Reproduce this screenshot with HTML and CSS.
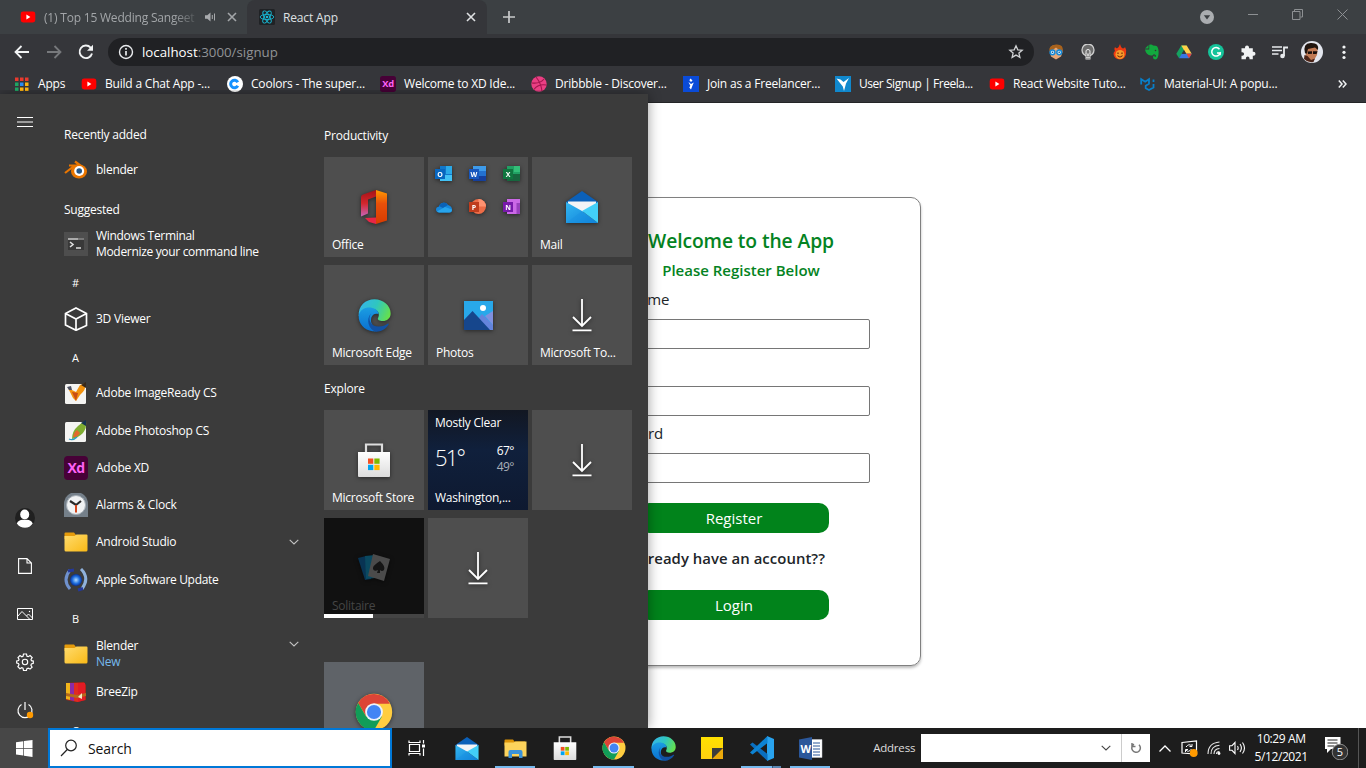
FILE: index.html
```html
<!DOCTYPE html>
<html lang="en">
<head>
<meta charset="utf-8">
<title>React App</title>
<link rel="stylesheet" href="styles.css">
</head>
<body>
<svg class="defs" aria-hidden="true">
  <defs>
    <linearGradient id="gEdgeA" x1="0" y1="0.3" x2="1" y2="0.6"><stop offset="0" stop-color="#35b5e8"/><stop offset=".5" stop-color="#2fc6c0"/><stop offset="1" stop-color="#66e04b"/></linearGradient>
    <linearGradient id="gEdgeB" x1="0" y1="0" x2="0" y2="1"><stop offset="0" stop-color="#1b9de2"/><stop offset="1" stop-color="#0a6fd0"/></linearGradient>
    <linearGradient id="gMail" x1="0" y1="0" x2="1" y2="1"><stop offset="0" stop-color="#34b7f1"/><stop offset="1" stop-color="#0d7fd8"/></linearGradient>
    <linearGradient id="gOff" x1="0" y1="0" x2="0" y2="1"><stop offset="0" stop-color="#a31217"/><stop offset=".5" stop-color="#d3262c"/><stop offset="1" stop-color="#c765b8"/></linearGradient>
    <linearGradient id="gOffR" x1="0" y1="0" x2="0" y2="1"><stop offset="0" stop-color="#ff9a00"/><stop offset=".4" stop-color="#e8500a"/><stop offset="1" stop-color="#d83b01"/></linearGradient>
    <linearGradient id="gFold" x1="0" y1="0" x2="1" y2="1"><stop offset="0" stop-color="#ffdc6e"/><stop offset="1" stop-color="#f9b916"/></linearGradient>
    <linearGradient id="gBag" x1="0" y1="0" x2="0" y2="1"><stop offset="0" stop-color="#fff"/><stop offset="1" stop-color="#dcdcdc"/></linearGradient>
    <linearGradient id="gNote" x1="0" y1="0" x2="0" y2="1"><stop offset="0" stop-color="#ffe100"/><stop offset="1" stop-color="#ffcf10"/></linearGradient>
    <radialGradient id="gGlobe"><stop offset="0" stop-color="#b4dcff"/><stop offset=".6" stop-color="#1f70e0"/><stop offset="1" stop-color="#0b2f90"/></radialGradient>
    <symbol id="youtube" viewBox="0 0 16 12"><rect x=".7" y=".6" width="14.6" height="10.8" rx="2.4" fill="#f00"/><path d="M6.4 3.6v4.8L10.4 6z" fill="#fff"/></symbol>
    <symbol id="close" viewBox="0 0 10 10"><path d="M1 1l8 8M9 1L1 9" fill="none" stroke="currentColor" stroke-width="1.6"/></symbol>
    <symbol id="chev" viewBox="0 0 10 6"><path d="M.7.8L5 5 9.300.8" fill="none" stroke="currentColor" stroke-width="1.1"/></symbol>
    <symbol id="chrome" viewBox="0 0 48 48"><circle cx="24" cy="24" r="23" fill="#ffcd40"/><path d="M4 12.500A23 23 0 0 1 44 13.500H24L14 29.500z" fill="#dc4437"/><path d="M4 12.500A23 23 0 0 0 24 47L34 29.700H14z" fill="#119d58"/><circle cx="24" cy="24" r="11.200" fill="#eef2fa"/><circle cx="24" cy="24" r="8.900" fill="#4285f4"/></symbol>
    <symbol id="edge" viewBox="0 0 48 48"><path d="M1 25C0 10 11 .5 24 .5 37 .5 47.500 10 47.500 21c0 7-5.500 11-11.500 11-5 0-8-2-7-4 3-5 1-12-6-13C13 13 4 18 1 25z" fill="url(#gEdgeA)"/><path d="M1 24C3 14 13 11 21 13c7 2 9 6 9 9-10-3-13 8-10 14 3 6 9 8 14 8-4 3-9 3.500-13 3C9 45 .5 36 1 24z" fill="url(#gEdgeB)"/><path d="M19 21c-6 9 0 19 11 19 6 0 10-2 13-4 1-.5 2 0 1.500 1C40 44 33 47.500 27 47.500 15 45 11 29 19 21z" fill="#1251a3"/></symbol>
    <symbol id="mail" viewBox="0 0 36 34"><path d="M2 12L18 1l16 11-3 6H5z" fill="#0b60b8"/><path d="M4 11.500h28v5L18 22 4 16z" fill="#f4f4f6"/><path d="M2 12l16 9 16 12H2z" fill="url(#gMail)"/><path d="M34 12L18 21l16 12z" fill="#42cff8"/><path d="M2 33L18 21l16 12z" fill="#168ce0" opacity=".35"/></symbol>
    <symbol id="folder" viewBox="0 0 24 20"><path d="M.5 1.500Q.5.5 1.500.5H10l2 2.500H22v4H.5z" fill="#e59b0b"/><path d="M.5 4H10.500L12.500 2.500H22.500Q23.500 2.500 23.500 3.500V18Q23.500 19.500 22 19.500H2Q.5 19.500.5 18z" fill="url(#gFold)"/></symbol>
    <symbol id="store" viewBox="0 0 34 36"><path d="M9 12V2.500h16V12" fill="none" stroke="#ddd" stroke-width="2.200"/><path d="M1 10h32v24q0 1-1 1H2q-1 0-1-1z" fill="url(#gBag)"/><path d="M11 16.500h5.300v5.300H11z" fill="#f25022"/><path d="M17.300 16.500h5.300v5.300h-5.300z" fill="#7fba00"/><path d="M11 22.800h5.300v5.300H11z" fill="#00a4ef"/><path d="M17.300 22.800h5.300v5.300h-5.300z" fill="#ffb900"/></symbol>
    <symbol id="down" viewBox="0 0 20 34"><path d="M10 1v26M1 19l9 9 9-9M.5 32.300h19" fill="none" stroke="#fff" stroke-width="1.800"/></symbol>
    <symbol id="xd" viewBox="0 0 24 24"><rect width="24" height="24" rx="4" fill="#470137"/><text x="12" y="17" text-anchor="middle" font-family="Open Sans, sans-serif" font-size="14" font-weight="700" letter-spacing="-.5" fill="#ff61f6">Xd</text></symbol>
  </defs>
</svg>

<div class="desktop">
  <section class="browser">
    <header class="tabs">
      <div class="tab tab-idle">
        <svg class="tab-yt"><use href="#youtube"/></svg>
        <span class="tab-title fade">(1) Top 15 Wedding Sangeet</span>
        <svg class="speaker" viewBox="0 0 12 10"><path d="M0 3.300h2.300L5.500.5v9L2.300 6.700H0z" fill="#a8aaad"/><path d="M7.300 3v4M9.500 1.500v7" stroke="#a8aaad" fill="none"/></svg>
        <svg class="tab-x"><use href="#close"/></svg>
      </div>
      <div class="tab tab-active">
        <svg class="react" viewBox="0 0 16 16"><rect width="16" height="16" rx="1.500" fill="#202225"/><g fill="none" stroke="#18b8d4" stroke-width=".9"><ellipse cx="8" cy="8" rx="6.800" ry="2.600"/><ellipse cx="8" cy="8" rx="6.800" ry="2.600" transform="rotate(60 8 8)"/><ellipse cx="8" cy="8" rx="6.800" ry="2.600" transform="rotate(120 8 8)"/></g><circle cx="8" cy="8" r="1.300" fill="#18b8d4"/></svg>
        <span class="tab-title">React App</span>
        <svg class="tab-x"><use href="#close"/></svg>
      </div>
      <svg class="plus" viewBox="0 0 12 12"><path d="M6 0v12M0 6h12" stroke="#c8cacc" stroke-width="1.700"/></svg>
      <div class="window-buttons">
        <svg width="14" height="14" viewBox="0 0 14 14"><circle cx="7" cy="7" r="7" fill="#aaadb0"/><path d="M3.800 5.200h6.400L7 9.500z" fill="#3c4043"/></svg>
        <svg width="10" height="10" viewBox="0 0 10 10"><path d="M0 5.500h10" stroke="#8d9093"/></svg>
        <svg width="11" height="11" viewBox="0 0 11 11"><path d="M.5 2.500h7.500v8H.5zM2.500 2V.5h8v7.500H8.500" fill="none" stroke="#8d9093"/></svg>
        <svg width="11" height="11" viewBox="0 0 11 11"><path d="M.5.5l10 10M10.500.5l-10 10" stroke="#8d9093"/></svg>
      </div>
    </header>

    <div class="toolbar">
      <div class="nav">
        <svg width="16" height="14" viewBox="0 0 16 14"><path d="M15 7H1.500M7.500 1l-6 6 6 6" fill="none" stroke="#f1f3f4" stroke-width="1.800"/></svg>
        <svg width="16" height="14" viewBox="0 0 16 14"><path d="M1 7h13.500M8.500 1l6 6-6 6" fill="none" stroke="#77797c" stroke-width="1.800"/></svg>
        <svg width="16" height="16" viewBox="0 0 16 16"><path d="M14 9.500A6.300 6.300 0 1 1 12.600 3.600L14.300 5.500" fill="none" stroke="#f1f3f4" stroke-width="1.900"/><path d="M15 .8v6H9z" fill="#f1f3f4"/></svg>
      </div>
      <div class="omnibox">
        <svg class="info" viewBox="0 0 16 16"><circle cx="8" cy="8" r="6.500" fill="none" stroke="#e8eaed" stroke-width="1.400"/><path d="M8 7v4.500M8 4v1.700" stroke="#e8eaed" stroke-width="1.700"/></svg>
        <span class="url"><b>localhost</b>:3000/signup</span>
        <svg class="star" viewBox="0 0 16 16"><path d="M8 1.800l1.800 4 4.400.4-3.300 2.900 1 4.300L8 11.100l-3.900 2.300 1-4.300L1.800 6.200l4.400-.4z" fill="none" stroke="#d0d2d4" stroke-width="1.300"/></svg>
      </div>
      <div class="extensions">
        <svg viewBox="0 0 16 16"><path d="M2 8Q1 1 8 1t6.500 7L13 12.500 8 15.500l-5-3z" fill="#e8a878"/><path d="M1.500 8Q0 1 8 .5T14.500 7Q10 6 8 3.500 5 6 1.500 8z" fill="#a8621c"/><circle cx="4.500" cy="8.300" r="2.400" fill="#d8f3ff" stroke="#1689d8" stroke-width="1.500"/><circle cx="11.200" cy="8.300" r="2.400" fill="#d8f3ff" stroke="#1689d8" stroke-width="1.500"/><circle cx="4.500" cy="8.300" r=".8" fill="#114a80"/><circle cx="11.200" cy="8.300" r=".8" fill="#114a80"/></svg>
        <svg viewBox="0 0 16 16"><circle cx="8" cy="6" r="6" fill="#6d6d6d" stroke="#cfcfcf" stroke-width="1.300"/><path d="M5.500 9.500h5v6h-5z" fill="#d8d8d8"/><path d="M6.700 12V6.500Q8 5 9.300 6.500V12M5.500 12.500h5M5.500 14.300h5" fill="none" stroke="#8a8a8a" stroke-width=".9"/><path d="M6 10V6.500Q8 4 10 6.500V10" fill="none" stroke="#e6e6e6"/></svg>
        <svg viewBox="0 0 16 16"><path d="M3 7Q1.500 5.500 3 3q1.500 2 2.500 1Q7 3 8 0q1 4 3 4.500Q12.500 4 13 3q2 3 1 7-1 5-6 5.500-6-.5-6.500-5.500Q1.500 8 3 7z" fill="#ee3a12"/><circle cx="8" cy="10.500" r="4.500" fill="#f59a2a"/><path d="M6 8.500v1.500M10 8.500v1.500M5.500 11.500q2.500 3 5 0" stroke="#6a2008" fill="none" stroke-width="1.100"/></svg>
        <svg viewBox="0 0 16 16"><path d="M1 4.500L4.500 1V4.500zM5.200.7Q8 0 9 1.500q3 0 4 .8 2 2.500 1.500 8-.5 5-3 5.200-2.500 0-2.500-2.200 0-1.800 1.600-1.800v1.300q1.400.4 1.500-1-1-2-2.500-1.600Q9 12 7 11.500 2 11 1 5.400h4.200z" fill="#12a83e"/><circle cx="11.500" cy="6.500" r=".8" fill="#333"/></svg>
        <svg viewBox="0 0 16 16"><path d="M5.300 1.500h5.400L6 10l-3 4.300L.3 9.800z" fill="#15a260"/><path d="M5.300 1.500h5.400l5 8.300H10z" fill="#ffcf48"/><path d="M3 14.300l2.700-4.500h10L13 14.300z" fill="#3777e3"/><path d="M8 6l2.300 3.800H5.700z" fill="#35363a"/><path d="M10.500 9.800h5.200L13 14.300z" fill="#e84335"/></svg>
        <svg viewBox="0 0 16 16"><circle cx="8" cy="8" r="8" fill="#15c39a"/><path d="M11.500 5.200A4.300 4.300 0 1 0 12.200 9H9" fill="none" stroke="#fff" stroke-width="1.500"/><path d="M12.800 7.800v3.600l-2.600-2z" fill="#fff"/></svg>
        <svg viewBox="0 0 16 16"><path d="M1.500 4.200H5V3.500a2 2 0 0 1 4 0v.7h3.800v3.600h.7a2 2 0 0 1 0 4h-.7v3.500H9.500v-1a1.800 1.800 0 0 0-3.600 0v1H1.500v-3.500h.8a1.800 1.800 0 0 0 0-3.600h-.8z" fill="#f1f3f4"/></svg>
        <svg viewBox="0 0 16 16"><path d="M0 3h10M0 6.500h10M0 10h6.500" stroke="#e8eaed" stroke-width="1.700"/><path d="M12 12V3.500h4" fill="none" stroke="#e8eaed" stroke-width="1.800"/><circle cx="10.500" cy="12" r="2.300" fill="#e8eaed"/></svg>
        <svg class="avatar" viewBox="0 0 22 22"><circle cx="11" cy="11" r="11" fill="#e3e6ee"/><path d="M5 19Q4 9 5.500 7 8 3 12 4q5 1 4.500 6l-.5 4-3 5Q8 22 5 19z" fill="#c07a55"/><path d="M4 12Q1.500 2.500 9.500 2q9-.5 7.500 7L14 6.500 7 8l-1.500 5z" fill="#20150f"/><path d="M6.500 10.500l4.500-.3v2.600l-4 .2zM12 10.200h4.500l-1 2.800H12z" fill="#180f0d"/><path d="M3.500 14l3 1 3.500 4 4-1.500-1.500 3.500Q7 22 3 18z" fill="#4a2418"/></svg>
        <svg viewBox="0 0 16 16"><g fill="#f1f3f4"><circle cx="8" cy="3" r="1.600"/><circle cx="8" cy="8.300" r="1.600"/><circle cx="8" cy="13.500" r="1.600"/></g></svg>
      </div>
    </div>

    <nav class="bookmarks">
      <a class="bm apps"><svg viewBox="0 0 14 14"><path d="M0 .5h3.500V4H0zM5 .5h3.500V4H5zM10 .5h3.500V4H10z" fill="#ea3a2e"/><path d="M0 5.500h3.500V9H0z" fill="#1fa463"/><path d="M5 5.500h3.500V9H5z" fill="#2b8cf4"/><path d="M10 5.500h3.500V9H10zM5 10.500h3.500V14H5zM10 10.500h3.500V14H10z" fill="#fbb212"/><path d="M0 10.500h3.500V14H0z" fill="#1fa463"/></svg><span>Apps</span></a>
      <a class="bm"><svg viewBox="0 0 16 12"><use href="#youtube"/></svg><span>Build a Chat App -...</span></a>
      <a class="bm"><svg viewBox="0 0 16 16"><circle cx="8" cy="8" r="8" fill="#fff"/><path d="M10.800 9.800A3.800 3.800 0 1 1 10.800 6.200" fill="none" stroke="#1591ff" stroke-width="3"/></svg><span>Coolors - The super...</span></a>
      <a class="bm"><svg viewBox="0 0 24 24"><use href="#xd"/></svg><span>Welcome to XD Ide...</span></a>
      <a class="bm"><svg viewBox="0 0 16 16"><circle cx="8" cy="8" r="7.700" fill="#ea3f83"/><path d="M5 1q5 6 6 14M1 7q8 1 12-4M3 13.500q4-6 12.500-4.500" fill="none" stroke="#a1154d" stroke-width="1.100"/></svg><span>Dribbble - Discover...</span></a>
      <a class="bm"><svg viewBox="0 0 16 16"><path d="M0 0h16v16H0z" fill="#0a4bd8"/><path d="M7.500 2.500l2 2-1.500 1.500-1.700-1.700zM5.500 6l2.500 2 2.800-1.500L9.500 9.500 8 13.500 6.300 11.500 7.300 9.800z" fill="#fff"/></svg><span>Join as a Freelancer...</span></a>
      <a class="bm freela"><svg viewBox="0 0 16 16"><path d="M0 0h16v16H0z" fill="#1088cd"/><path d="M1.500 2.500L5.500 3.500 8.500 6 14 2l-3 5.500L9 15 7.800 10.500 5 7z" fill="#fff"/></svg><span>User Signup | Freela...</span></a>
      <a class="bm"><svg viewBox="0 0 16 12"><use href="#youtube"/></svg><span>React Website Tuto...</span></a>
      <a class="bm"><svg viewBox="0 0 16 16"><path d="M1.200 8.500V3.200l4 2.500L9 3.200v4.500L5.700 9.800v2.500l3.300 1.700 4.500-2.500V8" fill="none" stroke="#087fc9" stroke-width="1.800"/><path d="M13.500 3.500V6" stroke="#087fc9" stroke-width="1.800"/></svg><span>Material-UI: A popu...</span></a>
      <a class="more"><svg width="9" height="8" viewBox="0 0 9 8"><path d="M.8.5L4 4 .8 7.500M4.800.5L8 4 4.800 7.500" fill="none" stroke="#f1f3f4" stroke-width="1.500"/></svg></a>
    </nav>

    <main class="page">
      <form class="card">
        <h1>Welcome to the App</h1>
        <h2>Please Register Below</h2>
        <label>Username<input type="text"></label>
        <label>Email<input type="text"></label>
        <label class="pw">Password<input type="text"></label>
        <button type="button">Register</button>
        <p>Already have an account??</p>
        <button type="button">Login</button>
      </form>
    </main>
  </section>

  <aside class="start">
    <div class="rail">
      <div class="burger"><svg width="16" height="10" viewBox="0 0 16 10"><path d="M0 .5h16M0 5h16M0 9.500h16" stroke="#fff"/></svg></div>
      <div><svg width="20" height="20" viewBox="0 0 20 20"><circle cx="10" cy="10" r="10" fill="#202020"/><ellipse cx="9.700" cy="6.500" rx="4.500" ry="5" fill="#fff"/><path d="M1.800 15.500Q4 11 9.700 12q6-1 8 3.500Q15 19.700 10 19.800 5 19.800 1.800 15.500z" fill="#fff"/></svg></div>
      <div><svg width="14" height="16" viewBox="0 0 14 16"><path d="M.6.600h8.400l4.400 4.400v10.400H.6zM9 .6V5h4.400" fill="none" stroke="#fff" stroke-width="1.100"/></svg></div>
      <div><svg width="16" height="12" viewBox="0 0 16 12"><path d="M.5.500h15v11H.5zM.5 8.500l4.500-5 7.500 7.500M9.500 8l2-2 4 4" fill="none" stroke="#fff"/><circle cx="12.500" cy="3.500" r=".7" fill="#fff"/></svg></div>
      <div><svg width="18" height="18" viewBox="0 0 18 18"><circle cx="9" cy="9" r="2.700" fill="none" stroke="#fff" stroke-width="1.100"/><path d="M7.500 1h3l.5 2.200 1.200.5 1.900-1.200 2.100 2.100L15 6.500l.5 1.200 1.800.4v2.300l-1.900.5-.5 1.300 1.200 1.900-2.100 2-1.800-1-1.300.5-.5 1.900H7.500L7 15.200l-1.300-.5-1.800 1-2-2 1.100-1.900-.5-1.300L.7 10V7.900l1.900-.4L3 6.300 2 4.600l2-2.100 1.800 1.200L7 3.200z" fill="none" stroke="#fff" stroke-width="1.200"/></svg></div>
      <div><svg width="18" height="18" viewBox="0 0 18 18"><path d="M5.500 3.500a7 7 0 1 0 7 0M9 1v8" fill="none" stroke="#fff" stroke-width="1.200"/><circle cx="14" cy="14" r="3.200" fill="#ff9a00"/></svg></div>
    </div>

    <div class="app-list">
      <div class="row head">Recently added</div>
      <div class="row down1"><svg viewBox="0 0 24 24"><path d="M1 15L10 8M5 7.500h9M11 3.500l8 6" stroke="#ea7600" stroke-width="2.200"/><ellipse cx="15" cy="13.500" rx="8" ry="7" fill="#ea7600"/><circle cx="15.200" cy="13" r="5" fill="#fff"/><circle cx="15.200" cy="13" r="2.800" fill="#265787"/></svg><span>blender</span></div>
      <div class="row head">Suggested</div>
      <div class="row"><svg viewBox="0 0 24 24"><path d="M0 0h24v24H0z" fill="#4e4e4e"/><path d="M4 6h16v12H4z" fill="#393939"/><path d="M4 6h10v2H4z" fill="#aaa"/><path d="M14 6h6v2h-6z" fill="#777"/><path d="M6 10l3 2.500L6 15M12 16h5" stroke="#ddd" stroke-width="1.600" fill="none"/></svg><span class="tight">Windows Terminal<br>Modernize your command line</span></div>
      <div class="row letter">#</div>
      <div class="row"><svg viewBox="0 0 24 24"><path d="M12 1l10.500 5.500v12L12 23.300 1.500 18V6.500zM1.500 6.500L12 12l10.500-5.500M12 12v11" fill="none" stroke="#fff" stroke-width="1.700"/></svg><span>3D Viewer</span></div>
      <div class="row letter">A</div>
      <div class="row"><svg viewBox="0 0 24 24"><rect x="1" y="3" width="21" height="20" rx="1.500" fill="#f4f4f2"/><path d="M4 7l8 4 4-7 6-2q0 7-6 12l-4 6-3-3z" fill="#f2920e"/><path d="M8 11l4 9 2-8z" fill="#c94d12"/><path d="M17 4l5-3v6z" fill="#38291b"/><path d="M3 6l4-1 1 4H5z" fill="#4b5062"/></svg><span>Adobe ImageReady CS</span></div>
      <div class="row"><svg viewBox="0 0 24 24"><rect x="1" y="3" width="21" height="20" rx="1.500" fill="#f4f4f2"/><path d="M8 20Q8 12 14 7q4-4 8-5 1 7-3 12-5 5-11 6z" fill="#7fad32"/><path d="M9 18q1-5 4-7l3 3q-3 5-7 4z" fill="#e2682c"/><path d="M17 4l5-3v6z" fill="#153452"/><path d="M5 20q4 2 8-2" fill="none" stroke="#2b9bc6" stroke-width="1.300"/></svg><span>Adobe Photoshop CS</span></div>
      <div class="row"><svg viewBox="0 0 24 24"><use href="#xd"/></svg><span>Adobe XD</span></div>
      <div class="row"><svg viewBox="0 0 24 24"><path d="M0 24V11A11 11 0 0 1 24 11V24z" fill="#75808a"/><circle cx="12" cy="12" r="9.500" fill="#f0f2f3" stroke="#a7afb7"/><path d="M6 8l6 4 5-4" fill="none" stroke="#282828" stroke-width="2.200"/><path d="M12 12v7.500" stroke="#d3441b" stroke-width="2"/></svg><span>Alarms &amp; Clock</span></div>
      <div class="row up1"><svg viewBox="0 0 24 20"><use href="#folder"/></svg><span>Android Studio</span><svg class="chev"><use href="#chev"/></svg></div>
      <div class="row"><svg viewBox="0 0 24 24"><circle cx="12" cy="12" r="6" fill="url(#gGlobe)"/><path d="M6 2Q-2 12 6 21" fill="none" stroke="#6f91cd" stroke-width="3"/><path d="M17 1q9 9 1 20" fill="none" stroke="#8fb1db" stroke-width="3"/><path d="M4 3l6-1M14 22l5-1.500" stroke="#24399a" stroke-width="3"/></svg><span class="tight">Apple Software Update</span></div>
      <div class="row letter">B</div>
      <div class="row tall up1"><svg viewBox="0 0 24 20"><use href="#folder"/></svg><span>Blender<br><em>New</em></span><svg class="chev"><use href="#chev"/></svg></div>
      <div class="row"><svg viewBox="0 0 24 24"><path d="M2 3l18-1 2 3v15l-9 2-11-2z" fill="#b22415"/><path d="M2 3h4v17l-4-1z" fill="#f1b51b"/><path d="M6 3h4v18l-4-1z" fill="#8b2ba7"/><path d="M10 3h4v19l-4-1z" fill="#e02c21"/><path d="M14 3h7v17l-7 2z" fill="#e21b25"/><path d="M2 13l11 2 9-2v3l-9 2-11-2z" fill="#b46a1c"/><path d="M14 17l4-4v6z" fill="#f4e7bf"/></svg><span>BreeZip</span></div>
      <div class="row letter">C</div>
    </div>

    <div class="tiles">
      <h3>Productivity</h3>
      <div class="grid">
        <div class="tile"><svg width="32" height="36" viewBox="0 0 32 36"><path d="M3 8Q3 6 5 5.500L18 1v6.500L10 10.500v14l-7 3z" fill="url(#gOff)"/><path d="M18 1l11 3.500v27L18 35z" fill="url(#gOffR)"/><path d="M7 29l11-.5V35L11 33z" fill="#e82645"/></svg><span>Office</span></div>
        <div class="tile minis">
          <svg viewBox="0 0 18 16"><path d="M5 0h12v15H5z" fill="#1177ca"/><path d="M11 0h6v8h-6z" fill="#2aa9e8"/><path d="M5 9l12 0v6H5z" fill="#42c2f5"/><path d="M0 3h10v10H0z" fill="#0866bf"/><text x="5" y="10.600" text-anchor="middle">O</text></svg>
          <svg viewBox="0 0 18 16"><path d="M4 0h13v5H4z" fill="#3e9bea"/><path d="M4 5h13v5H4z" fill="#2371cf"/><path d="M4 10h13v5H4z" fill="#153f9c"/><path d="M0 3h10v10H0z" fill="#1857bd"/><text x="5" y="10.600" text-anchor="middle">W</text></svg>
          <svg viewBox="0 0 18 16"><path d="M4 0h13v8H4z" fill="#21a063"/><path d="M11 0h6v6h-6z" fill="#33bf78"/><path d="M4 8h13v7H4z" fill="#17663e"/><path d="M0 3h10v10H0z" fill="#10763f"/><text x="5" y="10.600" text-anchor="middle">X</text></svg>
          <svg viewBox="0 0 18 16"><path d="M4 7.500A5 5 0 0 1 13 6q4 1 4 4.500T14 13.500H4Q1 13 1 10.500T4 7.500z" fill="#1587dc"/><path d="M4 7A5 5 0 0 1 13 6L8 9z" fill="#0b62b7"/><path d="M2 12.500L10 8l7 2.500q0 3-3 3H4z" fill="#27a5ed"/></svg>
          <svg viewBox="0 0 18 16"><circle cx="9.500" cy="7.500" r="7.500" fill="#ed6c47"/><path d="M9.500 0a7.500 7.500 0 0 1 7.500 7.500H9.500z" fill="#ff9270"/><path d="M0 3h10v10H0z" fill="#bf3d1e"/><text x="5" y="10.600" text-anchor="middle">P</text></svg>
          <svg viewBox="0 0 18 16"><path d="M4 0h13v15H4z" fill="#cb68e7"/><path d="M13.500 4H17v4h-3.500zM13.500 8H17v7h-3.500z" fill="#9840bd"/><path d="M0 3h10v10H0z" fill="#7719aa"/><text x="5" y="10.600" text-anchor="middle">N</text></svg>
        </div>
        <div class="tile"><svg width="36" height="34"><use href="#mail"/></svg><span>Mail</span></div>
        <div class="tile"><svg width="33" height="33"><use href="#edge"/></svg><span>Microsoft Edge</span></div>
        <div class="tile"><svg width="29" height="29" viewBox="0 0 29 29"><path d="M0 0h29v29H0z" fill="#28a8ea"/><path d="M13 29V19l5-6 11 11v5z" fill="#6484dc"/><path d="M29 10v14l-8-9z" fill="#8090df"/><path d="M0 19L8.500 10 26 29H0z" fill="#16468c"/><circle cx="19" cy="7" r="3" fill="#fff"/></svg><span>Photos</span></div>
        <div class="tile"><svg width="20" height="34"><use href="#down"/></svg><span>Microsoft To...</span></div>
      </div>
      <h3>Explore</h3>
      <div class="grid">
        <div class="tile"><svg width="34" height="36"><use href="#store"/></svg><span>Microsoft Store</span></div>
        <div class="tile weather">
          <div>Mostly Clear</div>
          <div class="temps"><strong>51°</strong><div>67°<i>49°</i></div></div>
          <div>Washington,...</div>
        </div>
        <div class="tile"><svg width="20" height="34"><use href="#down"/></svg></div>
        <div class="tile solitaire"><svg width="32" height="30" viewBox="0 0 32 30"><path d="M0 5l8-2 5 23-6 1z" fill="#083353"/><path d="M7 3l10-1v23l-9 1z" fill="#0a4960"/><path d="M15 1l17 5-6 22-16-5z" fill="#4b4b4b"/><path d="M22 8q6 6 4 9-2 2-4 0v3h-3l1-3q-4 2-5-1t7-8z" fill="#151515"/></svg><span>Solitaire</span><div class="progress"></div></div>
        <div class="tile"><svg width="20" height="34"><use href="#down"/></svg></div>
      </div>
      <div class="grid third">
        <div class="tile chrome-tile"><svg width="38" height="38"><use href="#chrome"/></svg></div>
      </div>
    </div>
  </aside>

  <footer class="taskbar">
    <div class="win"><svg width="17" height="17" viewBox="0 0 17 17"><path d="M0 2.200L7.300 1.200v6.800H0zM8 1.100L16.500 0v8H8zM0 8.700h7.300v6.900L0 14.600zM8 8.700h8.500V17L8 15.700z" fill="#fff"/></svg></div>
    <div class="search"><svg width="18" height="18" viewBox="0 0 18 18"><circle cx="11" cy="6.500" r="5.300" fill="none" stroke="#222" stroke-width="1.200"/><path d="M7.300 10.500L1 17" stroke="#222" stroke-width="1.200"/></svg>Search</div>
    <div class="pins">
      <div><svg width="18" height="16" viewBox="0 0 18 16"><path d="M1.500 4.500h10v7h-10zM1 .5v2h11v-2M1 15.500v-2h11v2M15.500 0v3.500M15.500 8.500V16" fill="none" stroke="#fff" stroke-width="1.200"/><path d="M14 4.500h3v3h-3z" fill="#fff"/></svg></div>
      <div><svg width="26" height="25"><use href="#mail"/></svg></div>
      <div class="on"><svg width="23" height="19" viewBox="0 0 23 19"><path d="M.5 1.500Q.5.5 1.500.5H9l1.500 2H21v4H.5z" fill="#dc9307"/><path d="M.5 3.500h9l2-1H22.500V17.500H.5z" fill="#fcd35c"/><path d="M4.500 19v-6q0-2 2-2h10q2 0 2 2v6H15v-4H8v4z" fill="#3b92d8"/></svg></div>
      <div><svg width="24" height="26"><use href="#store"/></svg></div>
      <div class="on"><svg width="24" height="24"><use href="#chrome"/></svg></div>
      <div><svg width="25" height="25"><use href="#edge"/></svg></div>
      <div><svg width="22" height="22" viewBox="0 0 22 22"><path d="M0 0h22v11H11v11H0z" fill="url(#gNote)"/><path d="M11 11h11L11 22z" fill="#3c3c3c"/><path d="M22 11v11H11z" fill="#eba90b"/></svg></div>
      <div class="on double"><svg width="25" height="25" viewBox="0 0 25 25"><path d="M18 0l7 3v19l-7 3z" fill="#29a3ee"/><path d="M1 8.500l2.500-2L18.500 18v7z" fill="#0a6fc0"/><path d="M1 16.500l2.500 2L18.500 7V0z" fill="#0d83d3"/></svg></div>
      <div class="on"><svg width="24" height="23" viewBox="0 0 24 23"><path d="M11 2.500h12v18H11z" fill="#fff" stroke="#c4c8d0" stroke-width=".5"/><path d="M14 6h7M14 9h7M14 12h7M14 15h7M14 18h7" stroke="#2b579a"/><path d="M0 2.500L13 0v23L0 20.500z" fill="#2b579a"/><text class="word" x="6.700" y="15.500" text-anchor="middle">W</text></svg></div>
    </div>
    <div class="tray">
      <span class="addr-label">Address</span>
      <div class="addr"><svg class="chev"><use href="#chev"/></svg><div><svg width="12" height="12" viewBox="0 0 12 12"><path d="M4 2.200A4.300 4.300 0 1 0 9 2.800M2 1v3.500h3.500" fill="none" stroke="#777" stroke-width="1.500"/></svg></div></div>
      <svg class="up" width="12" height="7" viewBox="0 0 12 7"><path d="M.5 6.500L6 1l5.500 5.500" fill="none" stroke="#fff" stroke-width="1.300"/></svg>
      <svg class="upd" width="17" height="17" viewBox="0 0 17 17"><path d="M1 2.500L15.500 1v13L1 13z" fill="none" stroke="#fff" stroke-width="1.200"/><path d="M5 7q3-4 5.500-1M11 4v2.500H8.500M10.500 9q-3 4-5.500 1M4.500 12V9.500H7" fill="none" stroke="#fff"/><circle cx="12.700" cy="13" r="3.900" fill="#ff9a00"/></svg>
      <svg class="wifi" width="14" height="14" viewBox="0 0 14 14"><path d="M1 13Q1 2 12.500 1M4 13Q4 5 12.500 4.300M7 13Q7 8 12.500 7.500M9.500 13q0-2.500 3-2.500" fill="none" stroke="#e8e8e8" stroke-width="1.100"/><circle cx="12" cy="12.500" r="1.400" fill="#fff"/></svg>
      <svg class="vol" width="17" height="14" viewBox="0 0 17 14"><path d="M.6 4.700H3L6 1.500v11L3 9.300H.6zM8.500 5q1.300 2 0 4M11 3q2.800 4 0 8M13.500 1.500q4 5.500 0 11" fill="none" stroke="#fff" stroke-width="1.100"/></svg>
      <div class="clock">10:29 AM<br>5/12/2021</div>
      <svg class="notif" width="24" height="24" viewBox="0 0 24 24"><path d="M1 1h15.500v12H7l-4 4v-4H1z" fill="#fff"/><path d="M3.500 4h10M3.500 7h10M3.500 10h7" stroke="#222"/><circle cx="16" cy="16" r="7.800" fill="#333" stroke="#8a8a8a"/><text x="16" y="20.300" text-anchor="middle">5</text></svg>
      <i class="peek"></i>
    </div>
  </footer>
</div>
</body>
</html>
```

FILE: styles.css
```css
* { box-sizing: border-box; }
body { margin: 0; width: 1366px; height: 768px; overflow: hidden; font-family: "Open Sans", "Noto Sans", sans-serif; font-size: 12px; }
svg { display: block; flex: none; }
.defs { position: absolute; width: 0; height: 0; }
.desktop { position: relative; display: flex; flex-direction: column; width: 1366px; height: 768px; }

/* browser chrome */
.browser { height: 728px; display: flex; flex-direction: column; color: #fff; }
.tabs { height: 34px; background: #3c4043; display: flex; align-items: center; }
.tab { height: 34px; display: flex; align-items: center; color: #dfe1e3; }
.tab-idle { width: 247px; padding: 0 10px 0 20px; color: #a3a6a9; }
.tab-active { width: 240px; padding: 0 11px 0 12px; background: #35363a; border-radius: 8px 8px 0 0; }
.tab-title { flex: 1; white-space: nowrap; overflow: hidden; letter-spacing: -.15px; }
.fade { letter-spacing: -.2px; -webkit-mask-image: linear-gradient(90deg, #000 85%, transparent 103%); mask-image: linear-gradient(90deg, #000 85%, transparent 103%); }
.tab-yt { width: 16px; height: 12px; margin-right: 8px; }
.speaker { width: 12px; height: 10px; margin: 0 10px 0 9px; }
.tab-x { width: 10px; height: 10px; }
.react { width: 16px; height: 16px; margin-right: 8px; }
.plus { width: 12px; height: 12px; margin-left: 16px; }
.window-buttons { margin-left: auto; width: 166px; padding-right: 18px; height: 28px; margin-top: -6px; display: flex; align-items: center; justify-content: space-between; }
.window-buttons svg:first-child { margin-top: 6px; }

.toolbar { height: 36px; background: #35363a; display: flex; align-items: center; }
.nav { width: 108px; padding: 0 14px; display: flex; align-items: center; justify-content: space-between; }
.omnibox { width: 926px; height: 28px; border-radius: 14px; background: #202124; display: flex; align-items: center; padding: 0 10px; }
.info { width: 16px; height: 16px; }
.url { flex: 1; margin-left: 8px; font-size: 13.300px; color: #919396; }
.url b { font-weight: 400; color: #fff; }
.star { width: 16px; height: 16px; }
.extensions { margin-left: 6px; display: grid; grid-template-columns: repeat(10, 32px); place-items: center; }
.extensions svg { width: 16px; height: 16px; }
.extensions .avatar { width: 22px; height: 22px; }

.bookmarks { height: 33px; padding: 0 0 5px 15px; background: #35363a; border-bottom: 1px solid #242527; display: grid; grid-template-columns: 66px 146px 153px 151px 152px 152px 154px 151px 198px 14px; align-items: center; letter-spacing: -.2px; }
.bm { display: flex; align-items: center; gap: 8px; white-space: nowrap; }
.bm svg { width: 16px; height: 16px; }
.apps { gap: 9px; }
.apps svg { width: 14px; height: 14px; }
.freela { letter-spacing: -.45px; }

/* web page */
.page { flex: 1; background: #fff; color: #212529; padding: 94px 0 0 560px; font-size: 15px; }
.card { width: 361px; height: 469px; border: 1px solid #808080; border-radius: 10px; box-shadow: 0 2px 3px #bbb; padding: 29px 51px 0 36px; display: flex; flex-direction: column; }
.card h1, .card h2 { margin: 0 -16px 0 0; text-align: center; color: #048322; font-weight: 600; white-space: nowrap; }
.card h1 { font-size: 19.300px; line-height: 28px; letter-spacing: -.1px; }
.card h2 { font-size: 15px; line-height: 30px; }
.card label { height: 67px; line-height: 28px; }
.card label.pw { letter-spacing: -.2px; }
.card input { display: block; width: 273px; height: 30px; margin-top: 6px; border: 1px solid #767676; border-radius: 2px; }
.card button { width: 190px; height: 30px; margin: 17px 0 0 42px; border: 0; border-radius: 10px; background: #01831b; color: #fff; font: 15px "Open Sans", sans-serif; flex: none; }
.card p { margin: 14px 0 0; padding-right: 44px; font-weight: 600; line-height: 22px; font-size: 14.900px; letter-spacing: .05px; text-align: right; white-space: nowrap; }
.card p + button { margin-top: 21px; }

/* start menu */
.start { position: absolute; left: 0; top: 94px; width: 648px; height: 634px; background: #3b3b3b; color: #fff; box-shadow: 0 0 12px rgba(0, 0, 0, .4); display: flex; overflow: hidden; clip-path: inset(-4px -14px 0 0); }
.rail { width: 49px; padding-top: 4px; display: flex; flex-direction: column; align-items: center; }
.rail div { height: 48px; flex: none; display: grid; place-items: center; }
.rail .burger { margin-bottom: 348px; }
.app-list { width: 275px; padding: 19.500px 26px 0 15px; display: flex; flex-direction: column; }
.row { height: 37.330px; flex: none; display: flex; align-items: center; gap: 8px; line-height: 16px; white-space: nowrap; letter-spacing: -.24px; }
.row > svg { width: 24px; height: 24px; }
.row span { flex: 1; }
.row span.tight { letter-spacing: -.32px; }
.row em { font-style: normal; color: #76b9ed; }
.row.up1 { padding-bottom: 1px; }
.row.down1 { padding-top: 1px; }
.head { padding-top: 5.500px; }
.letter { padding: 3px 0 0 8px; font-size: 11px; }
.row .chev, .addr .chev { width: 10px; height: 6px; color: #c4c4c4; }
.row .chev { margin-right: -.5px; }
.tall .chev { margin-bottom: 20px; }

.tiles { width: 308px; padding-top: 32px; }
.tiles h3 { margin: 0; height: 31px; line-height: 20px; font-size: 12px; font-weight: 400; letter-spacing: -.2px; }
.grid { display: grid; grid-template-columns: repeat(3, 100px); gap: 8px 4px; margin-bottom: 13.600px; }
.third { margin-top: 44.500px; }
.tile { position: relative; height: 100px; background: #4e4e4e; display: grid; place-items: center; }
.tile > span { position: absolute; left: 8px; bottom: 4px; line-height: 16px; letter-spacing: -.25px; }
.tile > svg { filter: drop-shadow(0 1px 2px rgba(0, 0, 0, .5)); }
.minis { grid-template-columns: repeat(3, 34px); grid-auto-rows: 33px; align-content: start; justify-content: center; }
.minis svg { width: 18px; height: 16px; }
.minis text { font-size: 7px; font-weight: 700; fill: #fff; }
.weather { background: linear-gradient(#121722, #10203c 40%, #0e1930); padding: 4px 7px; display: flex; flex-direction: column; align-items: stretch; justify-content: space-between; line-height: 17px; letter-spacing: -.25px; }
.temps { display: flex; justify-content: space-between; align-items: center; padding-right: 7px; line-height: 16px; letter-spacing: -.5px; }
.temps strong { font-size: 22px; font-weight: 300; letter-spacing: -1.800px; padding-bottom: 5px; }
.temps div { padding-bottom: 1px; }
.temps i { display: block; font-style: normal; color: #aab0ba; }
.solitaire { background: #111; color: #454545; }
.progress { position: absolute; left: 0; right: 0; bottom: 0; height: 4px; background: linear-gradient(90deg, #fff 49px, #444 49px); }
.chrome-tile { background: #5f6368; }

/* taskbar */
.taskbar { height: 40px; background: #1d1d1d; color: #fff; display: flex; }
.win { width: 48px; background: #474747; display: grid; place-items: center; }
.search { width: 344px; border: 2px solid #0078d7; background: #fff; color: #111; display: flex; align-items: center; gap: 10px; padding-left: 10px; font-size: 14px; letter-spacing: -.1px; }
.pins { display: grid; grid-template-columns: 49px repeat(8, 49.150px); }
.pins div { display: grid; place-items: center; position: relative; padding-left: 2px; }
.pins div:first-child { padding: 0; }
.on::after { content: ""; position: absolute; left: 5px; right: 4px; bottom: 0; height: 2px; background: #76b9ed; }
.double::after { background: linear-gradient(90deg, #76b9ed 31px, #34577a 31px, #34577a 32px, #5a86b0 32px); }
.word { font-size: 11px; font-weight: 700; fill: #fff; }
.tray { flex: 1; display: flex; align-items: center; }
.addr-label { margin-left: 39px; width: 48px; color: #ddd; font-size: 11.500px; letter-spacing: -.2px; padding-bottom: 1px; }
.addr { width: 229px; height: 28px; background: #fff; display: flex; align-items: center; justify-content: flex-end; }
.addr .chev { color: #444; margin-right: 10px; }
.addr div { width: 29px; height: 28px; border-left: 1px solid #ccc; display: grid; place-items: center; }
.up { margin-left: 9px; }
.upd { margin-left: 10px; }
.wifi { margin-left: 9px; }
.vol { margin-left: 8px; }
.clock { width: 64px; margin-left: 3px; text-align: center; line-height: 18px; font-size: 12px; letter-spacing: -.4px; white-space: nowrap; padding-bottom: 1px; }
.notif { margin-left: 11px; }
.notif text { font-size: 11px; fill: #fff; }
.peek { margin-left: auto; margin-right: 7px; width: 1px; height: 40px; background: #555; }
```
